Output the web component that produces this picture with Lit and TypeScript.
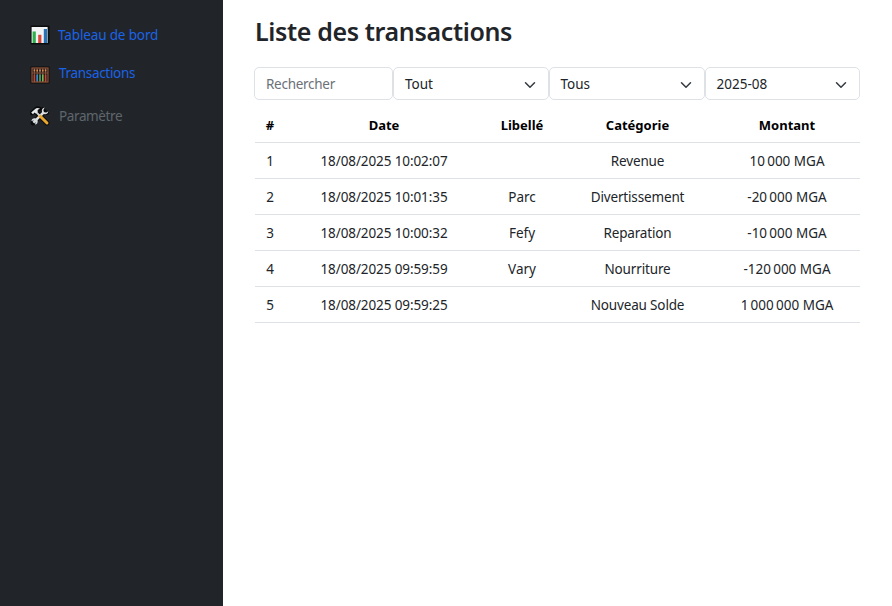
import { LitElement, html, css, svg } from "lit";
import { customElement } from "lit/decorators.js";

interface Transaction {
  date: string;
  label: string;
  category: string;
  amount: string;
}

const transactions: Transaction[] = [
  { date: "18/08/2025 10:02:07", label: "", category: "Revenue", amount: "10\u202f000 MGA" },
  { date: "18/08/2025 10:01:35", label: "Parc", category: "Divertissement", amount: "-20\u202f000 MGA" },
  { date: "18/08/2025 10:00:32", label: "Fefy", category: "Reparation", amount: "-10\u202f000 MGA" },
  { date: "18/08/2025 09:59:59", label: "Vary", category: "Nourriture", amount: "-120\u202f000 MGA" },
  { date: "18/08/2025 09:59:25", label: "", category: "Nouveau Solde", amount: "1\u202f000\u202f000 MGA" },
];

const chartIcon = html`<svg class="icon" viewBox="0 0 20 20" aria-hidden="true">
  <rect x="0.5" y="0.5" width="19" height="19" rx="1" fill="#0b0c0e" />
  <rect x="1.6" y="2" width="16" height="16" fill="#f2f3f5" />
  <rect x="2.6" y="6.5" width="3.2" height="11.5" fill="#2fae4c" />
  <rect x="8.2" y="9.8" width="3.2" height="8.2" fill="#d9463c" />
  <rect x="13.8" y="4" width="3.2" height="14" fill="#2873b8" />
</svg>`;

const beadColors = ["#c0452e", "#3f86c9", "#3fa565", "#7fb05a", "#c8453a"];
const abacusIcon = html`<svg class="icon" viewBox="0 0 20 20" aria-hidden="true">
  <rect x="0.5" y="1.5" width="19" height="17" rx="1" fill="#0d0c0c" />
  <rect x="2" y="3" width="16" height="14" fill="#1b1717" stroke="#94543a" stroke-width="1.2" />
  ${[4.4, 7.2, 10, 12.8, 15.6].map(
    (x, i) => svg`
      <path d="M${x} 3.5V17" stroke="#b98a6a" stroke-width="0.6" />
      <path d="M${x} 4.4V6.4" stroke="#d98b54" stroke-width="1.6" />
      <path d="M${x} 9.6V16.2" stroke=${beadColors[i]} stroke-width="1.6" />`
  )}
  <path d="M2 8H18" stroke="#94543a" stroke-width="0.9" />
</svg>`;

const toolsIcon = html`<svg class="icon" viewBox="0 0 20 20" aria-hidden="true">
  <g stroke="#090a0b" stroke-linecap="round" stroke-linejoin="round" fill="none">
    <path d="M3 17L14 6" stroke-width="4.6" />
    <path d="M7 7L17 17" stroke-width="4.8" />
    <path d="M2 7L7 2.5L9.5 3" stroke-width="4.4" />
    <path d="M13.2 3.2V6.8H16.8" stroke-width="4.4" />
  </g>
  <path d="M3.4 16.6L14 6" stroke="#d9dde0" stroke-width="2.5" />
  <path d="M14.8 1.6C12.5 2 11.3 3.9 12 6L14 8C16.1 8.7 18 7.5 18.4 5.2L16.2 6.5L13.6 6.3L13.5 3.8Z" fill="#d9dde0" />
  <path d="M5.6 12.4C3.4 11.8 1.6 13 1.4 15.1L3.6 14.4L5.6 16.4L4.9 18.6C7 18.4 8.2 16.6 7.6 14.4Z" fill="#d9dde0" />
  <path d="M9.5 9.5L17 17" stroke="#e9a72e" stroke-width="3" stroke-linecap="round" />
  <path d="M5.8 5.8L9.6 9.6" stroke="#cfd3d6" stroke-width="2" />
  <path d="M1.2 6.6L5.2 3Q7 1.3 10 2.6L7.6 4.1L7.8 5.6L5.9 7.4L4.5 6.4L3 8.2Z" fill="#e6e9eb" />
</svg>`;

const chevron = html`<svg class="chevron" viewBox="0 0 16 16" aria-hidden="true">
  <path d="m2 5 6 6 6-6" fill="none" stroke="#343a40" stroke-width="2" stroke-linecap="round" stroke-linejoin="round" />
</svg>`;

@customElement("app-root")
export class AppRoot extends LitElement {
  static styles = css`
    :host {
      display: flex;
      height: 100vh;
      overflow: hidden;
      background: #fff;
      color: #212529;
      font: 13.5px/21px "Noto Sans", "Open Sans", sans-serif;
    }
    * {
      box-sizing: border-box;
    }
    .sidebar {
      flex: none;
      width: 223px;
      padding: 25px 0 0 30px;
      background: #212529;
    }
    .link {
      display: flex;
      height: 21px;
      color: #1a63e8;
      white-space: nowrap;
    }
    .link .icon {
      flex: none;
      width: 20px;
      height: 20px;
    }
    .board {
      gap: 8px;
      letter-spacing: -0.14px;
      margin-bottom: 17px;
    }
    .moves {
      gap: 9px;
      letter-spacing: -0.32px;
      margin-bottom: 22px;
    }
    .moves .icon {
      margin-top: 2px;
    }
    .settings {
      gap: 9px;
      color: #5f666d;
      letter-spacing: -0.38px;
    }
    main {
      flex: none;
      width: 606px;
      margin-left: 32px;
      padding-top: 16px;
    }
    h1 {
      margin: 0 0 20px;
      font-size: 25px;
      line-height: 31px;
      font-weight: 600;
      letter-spacing: -0.36px;
      white-space: nowrap;
    }
    .filters {
      display: grid;
      grid-template-columns: 139px 156px 156px 155px;
      margin: 0 0 7px -1px;
      width: 606px;
      height: 33px;
    }
    .field {
      display: flex;
      align-items: center;
      justify-content: space-between;
      padding: 2px 12px 0 11px;
      border: 1px solid #dee2e6;
      border-radius: 5px;
    }
    .field:nth-child(n + 3) {
      padding-left: 10.5px;
    }
    .search {
      color: #6b7177;
      letter-spacing: -0.28px;
    }
    .chevron {
      width: 12px;
      height: 12px;
    }
    table {
      width: 605px;
      table-layout: fixed;
      border-collapse: separate;
      border-spacing: 0;
      text-align: center;
    }
    th,
    td {
      height: 36px;
      padding: 1px 0 0;
      border-bottom: 1px solid #dee2e6;
      white-space: nowrap;
    }
    th {
      color: #000;
      font-weight: 700;
      font-size: 13px;
    }
    .num {
      width: 30px;
    }
    .date {
      width: 198px;
    }
    td.date {
      letter-spacing: -0.1px;
    }
    .label {
      width: 78px;
    }
    .category {
      width: 153px;
    }
    td.category {
      letter-spacing: -0.15px;
    }
  `;

  render() {
    return html`
      <nav class="sidebar">
        <div class="link board">${chartIcon}<span>Tableau de bord</span></div>
        <div class="link moves">${abacusIcon}<span>Transactions</span></div>
        <div class="link settings">${toolsIcon}<span>Paramètre</span></div>
      </nav>
      <main>
        <h1><span>Liste des transactions</span></h1>
        <div class="filters">
          <div class="field search"><span>Rechercher</span></div>
          ${["Tout", "Tous", "2025-08"].map(
            (value) => html`<div class="field"><span>${value}</span>${chevron}</div>`
          )}
        </div>
        <table>
          <thead>
            <tr>
              <th class="num">#</th>
              <th class="date">Date</th>
              <th class="label">Libellé</th>
              <th class="category">Catégorie</th>
              <th>Montant</th>
            </tr>
          </thead>
          <tbody>
            ${transactions.map(
              (t, i) => html`<tr>
                <td class="num">${i + 1}</td>
                <td class="date">${t.date}</td>
                <td class="label">${t.label}</td>
                <td class="category">${t.category}</td>
                <td class="amount">${t.amount}</td>
              </tr>`
            )}
          </tbody>
        </table>
      </main>
    `;
  }
}
